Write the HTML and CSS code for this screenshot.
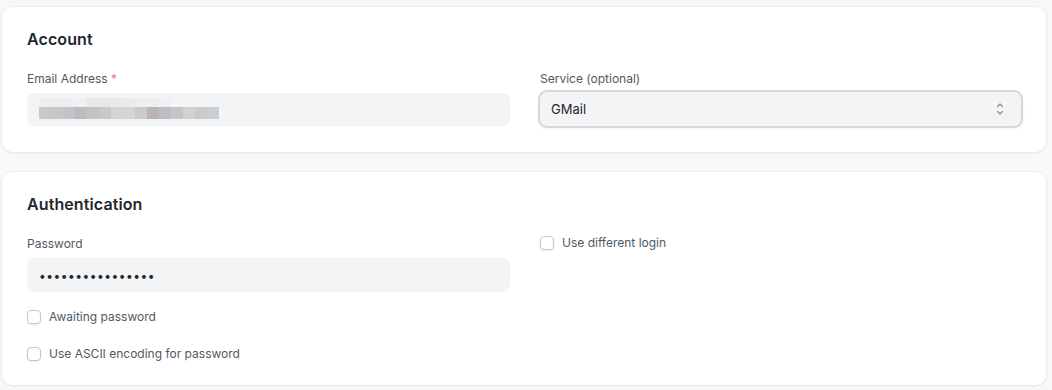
FILE: index.html
```html
<!DOCTYPE html>
<html>
<head>
<meta charset="utf-8">
<link rel="stylesheet" href="styles.css">
</head>
<body>
<div class="page">
  <section class="card card-account">
    <h2 class="card-title">Account</h2>
    <div class="row">
      <div class="field">
        <label class="label">Email Address <span class="req">*</span></label>
        <div class="input masked">
          <div class="blur-top">
            <span style="background:#eeeff1"></span><span style="background:#eceded"></span><span style="background:#eeeff0"></span><span style="background:#f0f0f2"></span><span style="background:#e8e8ea"></span><span style="background:#e6e6e8"></span><span style="background:#e9e9eb"></span><span style="background:#ebebed"></span><span style="background:#efeff1"></span><span style="background:#eeeef0"></span><span style="background:#f0f0f2"></span>
          </div>
          <div class="blur-row">
            <span style="background:#c8c8c9"></span><span style="background:#c9c5c8"></span><span style="background:#c5c3c8"></span><span style="background:#b9bcc0"></span><span style="background:#c2c3c2"></span><span style="background:#c8c7cc"></span><span style="background:#d3d3d8"></span><span style="background:#d7d4d7"></span><span style="background:#cbcbcf"></span><span style="background:#bab5b4"></span><span style="background:#c0bcc2"></span><span style="background:#c5c5c9"></span><span style="background:#d0d2d0"></span><span style="background:#cfc9c6"></span><span style="background:#c9cfd2"></span>
          </div>
        </div>
      </div>
      <div class="field">
        <label class="label">Service (optional)</label>
        <div class="input select">
          <span>GMail</span>
          <svg class="chev" width="8" height="14" viewBox="0 0 8 14" fill="none" stroke="#8a9097" stroke-width="1.2" stroke-linecap="round" stroke-linejoin="round"><path d="M1.5 4.5 L4 2 L6.5 4.5"/><path d="M1.5 9.5 L4 12 L6.5 9.5"/></svg>
        </div>
      </div>
    </div>
  </section>

  <section class="card card-auth">
    <h2 class="card-title">Authentication</h2>
    <div class="row">
      <div class="field">
        <label class="label">Password</label>
        <div class="input password">••••••••••••••••</div>
        <label class="check first"><span class="box"></span>Awaiting password</label>
        <label class="check"><span class="box"></span>Use ASCII encoding for password</label>
      </div>
      <div class="field">
        <label class="check top"><span class="box"></span>Use different login</label>
      </div>
    </div>
  </section>
</div>
</body>
</html>
```
FILE: styles.css
```css
* { box-sizing: border-box; }
html, body { margin: 0; padding: 0; }
body {
  background: #f7f8f8;
  font-family: Inter, "Noto Sans", sans-serif;
  color: #1f272e;
  width: 1052px;
  height: 390px;
  overflow: hidden;
}
.page {
  padding: 7px 6px 0 2px;
  display: flex;
  flex-direction: column;
  gap: 20px;
}
.card {
  background: #ffffff;
  border-radius: 10px;
  box-shadow: 0 0 0 1px rgba(0,0,0,0.03), 0 1px 3px rgba(0,0,0,0.06);
  padding: 21px 25px 26px 25px;
}
.card-auth { padding-bottom: 21px; }
.card-title {
  margin: 0 0 21px 0;
  font-size: 16px;
  line-height: 22px;
  font-weight: 600;
  color: #1f272e;
  letter-spacing: 0.1px;
}
.row {
  display: grid;
  grid-template-columns: 483px 1fr;
  column-gap: 30px;
}
.field { display: flex; flex-direction: column; }
.label {
  font-size: 12px;
  line-height: 16px;
  color: #4f5963;
  margin-bottom: 6px;
}
.req { color: #ef7b7b; }
.input {
  height: 33px;
  border-radius: 7px;
  background: #f3f4f5;
  font-size: 13px;
  display: flex;
  align-items: center;
  padding: 0 12px;
}
.masked {
  position: relative;
  flex-direction: column;
  align-items: flex-start;
  justify-content: center;
  padding: 0 12px;
}
.blur-top, .blur-row { display: flex; }
.blur-top span { width: 12px; height: 9px; display: block; }
.blur-row span { width: 12px; height: 12px; display: block; }
.blur-top { margin-top: -2px; }
.select {
  height: 34px;
  margin-top: -1px;
  justify-content: space-between;
  box-shadow: 0 0 0 2px #d6d7d9, 0 1px 3px 2px rgba(0,0,0,0.06);
  color: #1f272e;
  padding-left: 11px;
  padding-right: 17px;
}
.chev { display: block; }
.password {
  height: 34px;
  letter-spacing: 0.5px;
  font-size: 12px;
  color: #1f272e;
}
.check {
  display: flex;
  align-items: center;
  gap: 8px;
  font-size: 12px;
  line-height: 20px;
  color: #4f5963;
}
.check.first { margin-top: 15px; }
.check + .check { margin-top: 17px; }
.check.top { margin-top: -3px; }
.box {
  width: 14px;
  height: 14px;
  border: 1px solid #c3c7cc;
  border-radius: 4px;
  background: #fff;
  box-shadow: 0 1px 2px rgba(0,0,0,0.08);
  flex: none;
}
```
